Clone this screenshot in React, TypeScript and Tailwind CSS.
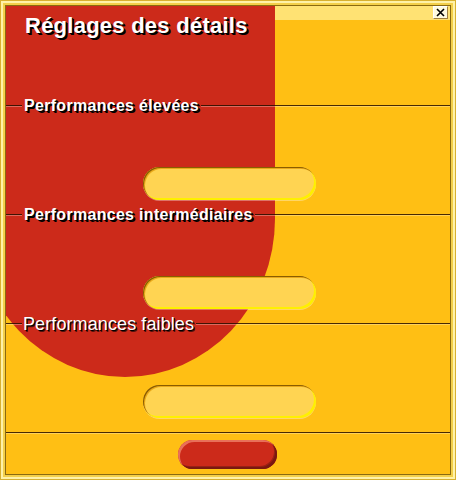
import React from "react";

const font = { fontFamily: '"Liberation Sans", Arial, sans-serif' };

function Line({ grow }: { grow?: boolean }) {
  return (
    <div
      className={
        (grow ? "flex-1 " : "w-[16px] ") +
        "h-[2px] border-t border-t-[rgba(40,15,0,0.85)] border-b border-b-[rgba(255,255,255,0.3)]"
      }
    />
  );
}

function Label({ text, light }: { text: string; light?: boolean }) {
  return (
    <div className="flex h-[20px] items-center">
      <Line />
      <span
        className={
          (light
            ? "ml-[1px] mr-[2px] text-[18px] font-normal tracking-[0.1px] [text-shadow:1px_1px_0_#000,1.5px_1.5px_0_rgba(0,0,0,0.6)] "
            : "ml-[2px] mr-[2px] text-[16px] font-bold tracking-[0.3px] [text-shadow:1px_1px_0_#000,2px_2px_0_#000] ") +
          "whitespace-nowrap leading-[20px] text-white"
        }
      >
        {text}
      </span>
      <Line grow />
    </div>
  );
}

function Pill({ mt }: { mt: string }) {
  return (
    <div
      className={
        mt +
        " ml-[137px] h-[33px] w-[173px] rounded-full bg-[#ffd452] shadow-[inset_1px_1px_0_#8a5c00,inset_2px_2px_0_#e9a91a,inset_-2px_-2px_0_#fff000,0_1px_0_rgba(255,255,255,0.35)]"
      }
    />
  );
}

export default function App() {
  return (
    <div style={font} className="h-[480px] w-[456px] border border-[#d8b030] bg-[#fff2a8] p-[2px]">
      <div className="h-full w-full bg-[#f3cf4a] p-[2px]">
        <div className="relative flex h-full w-full flex-col overflow-hidden border border-[#8a6a10] bg-[#ffbf14]">
          <div className="flex h-[14px] shrink-0 justify-end bg-[#ffe273]">
            <div className="mr-[2px] flex h-[13px] w-[15px] items-center justify-center border-t border-l border-t-white border-l-white border-b border-r border-b-[#a08040] border-r-[#a08040] bg-[#fffbe0]">
              <svg width="9" height="9" viewBox="0 0 9 9">
                <path d="M1 1 L8 8 M8 1 L1 8" stroke="#000" strokeWidth="1.6" />
              </svg>
            </div>
          </div>
          <div className="absolute left-[-31px] top-0 h-[371px] w-[300px] rounded-bl-[150px_158px] rounded-br-[150px_158px] bg-[#cc2a1a]" />
          <div className="relative flex flex-1 flex-col">
            <div className="h-[76px] shrink-0">
              <div className="-mt-[5px] pl-[19px] text-[22px] font-bold leading-[22px] tracking-[0.25px] text-white whitespace-nowrap [text-shadow:1px_1px_0_#000,2px_2px_0_#000]">
                Réglages des détails
              </div>
            </div>
            <Label text="Performances élevées" />
            <Pill mt="mt-[51px]" />
            <div className="mt-[5px]">
              <Label text="Performances intermédiaires" />
            </div>
            <Pill mt="mt-[51px]" />
            <div className="mt-[5px]">
              <Label text="Performances faibles" light />
            </div>
            <Pill mt="mt-[51px]" />
            <div className="mt-[14px] h-[2px] border-t border-t-[rgba(40,15,0,0.85)] border-b border-b-[rgba(255,255,255,0.3)]" />
            <div className="mt-[6px] ml-[172px] h-[29px] w-[99px] rounded-full bg-[#cc2a1a] shadow-[inset_2px_2px_0_#e8705a,inset_-2px_-2px_0_#7a1810,inset_-3px_-3px_0_#9a2014]" />
          </div>
        </div>
      </div>
    </div>
  );
}
